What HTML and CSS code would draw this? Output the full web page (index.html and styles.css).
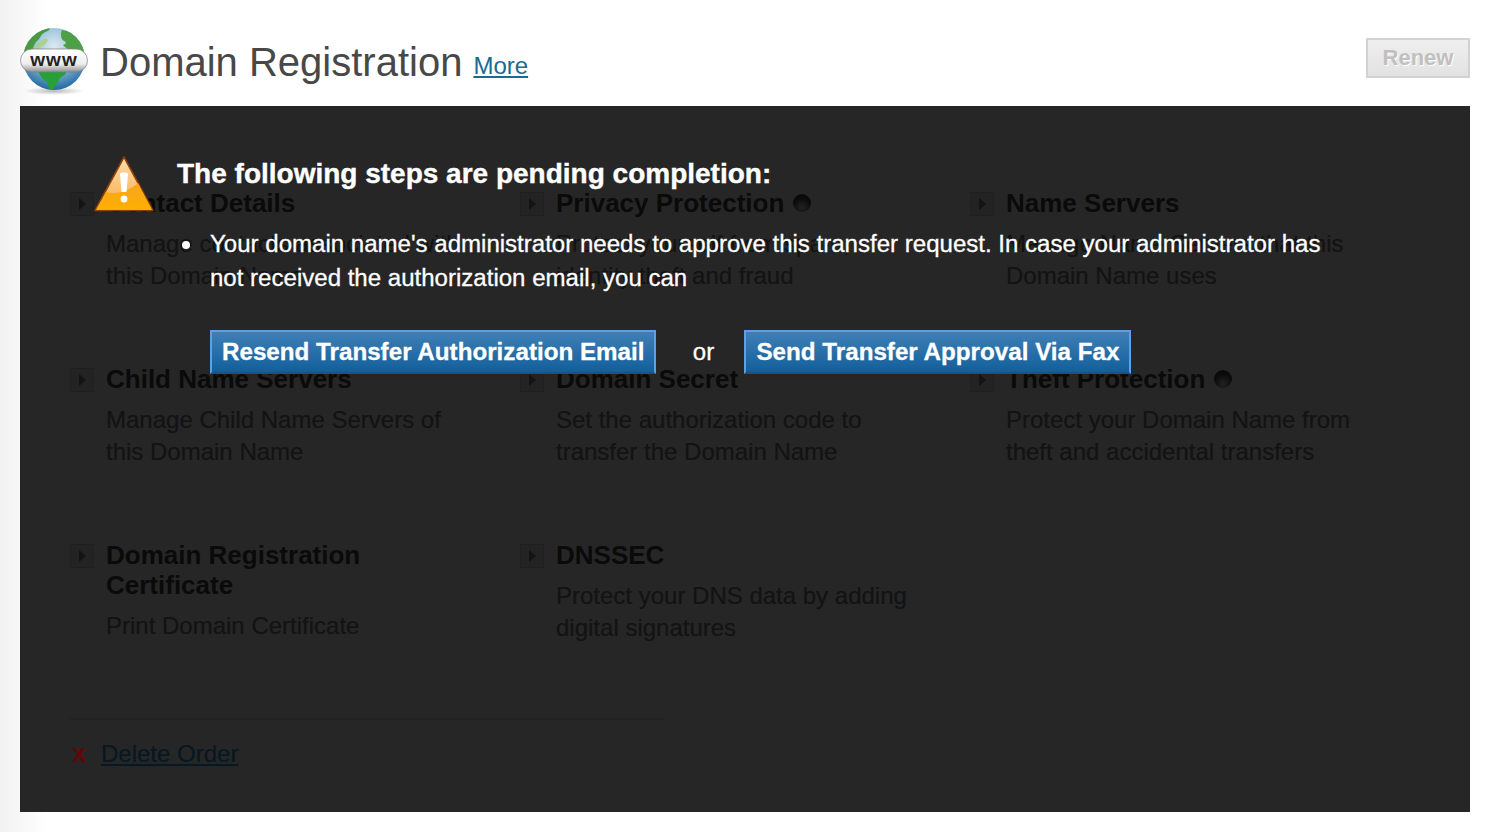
FILE: index.html
```html
<!DOCTYPE html>
<html>
<head>
  <title>Domain Registration</title>
  <link rel="stylesheet" href="styles.css">
</head>
<body>
  <header class="page-head">
    <svg class="globe" viewBox="0 0 68 68" width="68" height="68">
      <defs>
        <radialGradient id="sea" cx="50%" cy="30%" r="75%">
          <stop offset="0" stop-color="#dfeaf0"/>
          <stop offset="0.5" stop-color="#8dbcd8"/>
          <stop offset="1" stop-color="#125c98"/>
        </radialGradient>
        <linearGradient id="pill" x1="0" y1="0" x2="0" y2="1">
          <stop offset="0" stop-color="#ffffff"/>
          <stop offset="0.65" stop-color="#eeeeee"/>
          <stop offset="1" stop-color="#8f8f8f"/>
        </linearGradient>
        <radialGradient id="shade" cx="50%" cy="50%" r="50%">
          <stop offset="0" stop-color="#888" stop-opacity="0.6"/>
          <stop offset="1" stop-color="#888" stop-opacity="0"/>
        </radialGradient>
        <clipPath id="ball">
          <circle cx="34" cy="32" r="31"/>
        </clipPath>
      </defs>
      <ellipse cx="34" cy="64" rx="30" ry="4" fill="url(#shade)"/>
      <circle cx="34" cy="32" r="31" fill="url(#sea)"/>
      <g clip-path="url(#ball)">
        <path d="M0 24V10L12 0h18c1 3-3 4-6 6-4 2-3 5-7 8-2 2-4 6-5 10z" fill="#4b9a42"/>
        <path d="M14 22c2-5 6-8 10-10 3-1 5 0 3 3-3 4-7 5-8 7z" fill="#a9d08e"/>
        <path d="M42 3c8 1 15 4 24 14v7H50c-2-3-5-3-7-6 3-1 4-3 1-4-3-2-4-6-2-11z" fill="#4f9f46"/>
        <path d="M18 44h28c1 3-3 5-6 7-2 2-1 4-4 7-2 3-4 5-6 6-2-4-1-7-3-9-4-2-7-6-9-11z" fill="#27a03a"/>
      </g>
      <rect x="0.5" y="22" width="67" height="23" rx="11.5" fill="url(#pill)" stroke="#7d7d7d" stroke-width="0.7"/>
      <text class="globe-text" x="34" y="39" text-anchor="middle">www</text>
    </svg>
    <h1>Domain Registration</h1>
    <a class="more" href="#">More</a>
    <button class="renew" disabled>Renew</button>
  </header>

  <section class="panel">
    <div class="options">
      <div class="option">
        <span class="arrow"></span>
        <div class="option-text">
          <h3>Contact Details</h3>
          <p>Manage contacts associated with this Domain Name</p>
        </div>
      </div>
      <div class="option">
        <span class="arrow"></span>
        <div class="option-text">
          <h3>Privacy Protection <span class="dot"></span></h3>
          <p>Protect yourself from spam, identity theft and fraud</p>
        </div>
      </div>
      <div class="option">
        <span class="arrow"></span>
        <div class="option-text">
          <h3>Name Servers</h3>
          <p>Manage Name Servers that this Domain Name uses</p>
        </div>
      </div>
      <div class="option">
        <span class="arrow"></span>
        <div class="option-text">
          <h3>Child Name Servers</h3>
          <p>Manage Child Name Servers of this Domain Name</p>
        </div>
      </div>
      <div class="option">
        <span class="arrow"></span>
        <div class="option-text">
          <h3>Domain Secret</h3>
          <p>Set the authorization code to transfer the Domain Name</p>
        </div>
      </div>
      <div class="option">
        <span class="arrow"></span>
        <div class="option-text">
          <h3>Theft Protection <span class="dot"></span></h3>
          <p>Protect your Domain Name from theft and accidental transfers</p>
        </div>
      </div>
      <div class="option">
        <span class="arrow"></span>
        <div class="option-text">
          <h3>Domain Registration Certificate</h3>
          <p>Print Domain Certificate</p>
        </div>
      </div>
      <div class="option">
        <span class="arrow"></span>
        <div class="option-text">
          <h3>DNSSEC</h3>
          <p>Protect your DNS data by adding digital signatures</p>
        </div>
      </div>
    </div>

    <div class="panel-foot">
      <span class="delete-x">x</span><a class="delete-link" href="#">Delete Order</a>
    </div>

    <div class="overlay">
      <svg class="warning" viewBox="0 0 60 56" width="60" height="56">
        <defs>
          <linearGradient id="warn" x1="0" y1="0" x2="0" y2="1">
            <stop offset="0" stop-color="#fbdcae"/>
            <stop offset="1" stop-color="#f8ae45"/>
          </linearGradient>
          <linearGradient id="warn-low" x1="0" y1="0" x2="0" y2="1">
            <stop offset="0" stop-color="#f9a420"/>
            <stop offset="1" stop-color="#ffb000"/>
          </linearGradient>
        </defs>
        <path d="M30 1 L59 54.5 L1 54.5 Z" fill="url(#warn)" stroke="#8f3f0a" stroke-width="1.6" stroke-linejoin="round"/>
        <path d="M44 27 L58 53.8 L2 53.8 L12 36 C22 39 35 35 44 27 Z" fill="url(#warn-low)"/>
        <path d="M26 18c0-2 8-2 8 0l-1.5 18h-5z" fill="#fff"/>
        <circle cx="30" cy="43" r="3.4" fill="#fff"/>
      </svg>
      <div class="overlay-body">
        <h2>The following steps are pending completion:</h2>
        <ul>
          <li>Your domain name's administrator needs to approve this transfer request. In case your administrator has not received the authorization email, you can</li>
        </ul>
        <div class="actions">
          <button class="blue-btn">Resend Transfer Authorization Email</button>
          <span class="or">or</span>
          <button class="blue-btn">Send Transfer Approval Via Fax</button>
        </div>
      </div>
    </div>
  </section>
</body>
</html>
```

FILE: styles.css
```css
body {
  margin: 0;
  padding: 0 20px 20px;
  font-family: "Liberation Sans", Arial, sans-serif;
  background: linear-gradient(90deg, #f2f2f2 0, #ffffff 48px);
  color: #444;
}

.page-head {
  display: flex;
  align-items: flex-start;
  height: 106px;
}

.globe {
  margin-top: 27px;
  flex: none;
}

.globe-text {
  font-family: "Liberation Sans", Arial, sans-serif;
  font-weight: bold;
  font-size: 19px;
  letter-spacing: 1px;
  fill: #222;
}

.page-head h1 {
  margin: 38px 0 0 12px;
  font-size: 40px;
  line-height: 48px;
  font-weight: normal;
  color: #484848;
}

.more {
  margin: 50px 0 0 11px;
  font-size: 24px;
  line-height: 32px;
  color: #1a6a96;
}

.renew {
  margin: 38px 0 0 auto;
  width: 104px;
  height: 40px;
  padding: 0;
  border: 2px solid #d2d2d2;
  background: linear-gradient(#efefef, #e2e2e2);
  color: #c0c0c0;
  font-family: inherit;
  font-size: 22px;
  font-weight: bold;
  text-shadow: 1px 1px 0 #fff;
}

.panel {
  position: relative;
  height: 706px;
  box-sizing: border-box;
  padding: 82px 50px 0;
  background-color: #262626;
}

.options {
  display: grid;
  grid-template-columns: repeat(3, 450px);
  grid-auto-rows: 176px;
}

.option {
  display: flex;
  gap: 12px;
}

.arrow {
  position: relative;
  flex: none;
  width: 22px;
  height: 22px;
  margin-top: 4px;
  border: 1px solid #1f1f1f;
  background-color: #232323;
}

.arrow::after {
  content: "";
  position: absolute;
  left: 8px;
  top: 5px;
  border-left: 7px solid #141414;
  border-top: 6px solid transparent;
  border-bottom: 6px solid transparent;
}

.option-text {
  width: 360px;
}

.option-text h3 {
  margin: 0;
  font-size: 26px;
  line-height: 30px;
  color: #0a0a0a;
}

.option-text p {
  margin: 10px 0 0;
  font-size: 24px;
  line-height: 32px;
  color: #131313;
  -webkit-text-stroke: 0.2px #131313;
}

.dot {
  display: inline-block;
  width: 18px;
  height: 18px;
  margin-left: 1px;
  border-radius: 50%;
  background: radial-gradient(circle at 50% 75%, #222 0, #0a0a0a 60%);
}

.panel-foot {
  position: relative;
  top: 2px;
  width: 595px;
  height: 70px;
  box-sizing: border-box;
  padding-top: 17px;
  border-top: 2px solid #222;
  font-size: 24px;
  line-height: 32px;
}

.delete-x {
  display: inline-block;
  width: 31px;
  padding-left: 2px;
  box-sizing: border-box;
  font-size: 26px;
  font-weight: bold;
  color: #600808;
}

.delete-link {
  color: #061822;
  -webkit-text-stroke: 0.2px #061822;
}

.overlay {
  position: absolute;
  inset: 0;
  display: flex;
  gap: 23px;
  padding: 50px 125px 0 74px;
  color: #fff;
}

.warning {
  flex: none;
}

.overlay-body {
  flex: 1;
}

.overlay h2 {
  margin: 1px 0 0;
  font-size: 28px;
  line-height: 34px;
  -webkit-text-stroke: 0.4px #fff;
}

.overlay ul {
  margin: 36px 0 0;
  padding-left: 33px;
  list-style: none;
  font-size: 24.06px;
  line-height: 34px;
  -webkit-text-stroke: 0.3px #fff;
}

.overlay li {
  position: relative;
}

.overlay li::before {
  content: "";
  position: absolute;
  left: -28px;
  top: 14px;
  width: 8px;
  height: 8px;
  border-radius: 50%;
  background-color: #fff;
}

.actions {
  display: flex;
  align-items: center;
  margin: 35px 0 0 33px;
}

.blue-btn {
  height: 44px;
  padding: 0 10px;
  border: 2px solid #5f9fe6;
  border-bottom-color: #12558c;
  background: linear-gradient(#3f7fb6, #125f9b);
  color: #fff;
  font-family: inherit;
  font-size: 24.2px;
  font-weight: bold;
  -webkit-text-stroke: 0.3px #fff;
}

.or {
  width: 88px;
  box-sizing: border-box;
  padding-left: 6px;
  text-align: center;
  font-size: 24px;
  -webkit-text-stroke: 0.3px #fff;
}
```
